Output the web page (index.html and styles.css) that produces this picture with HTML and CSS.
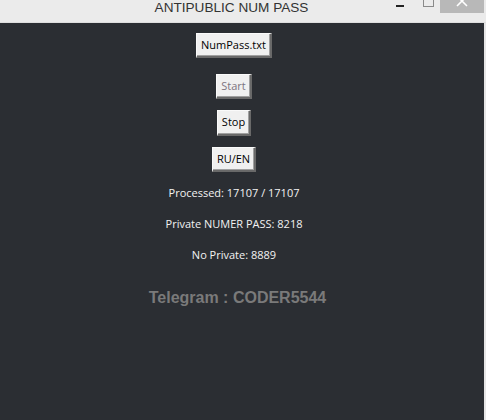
FILE: index.html
```html
<!DOCTYPE html>
<html>
<head>
<meta charset="utf-8">
<link rel="stylesheet" href="styles.css">
</head>
<body>
<div class="window">
  <div class="titlebar">
    <span class="title">ANTIPUBLIC NUM PASS</span>
    <span class="ctl-min"></span>
    <span class="ctl-max"></span>
    <span class="ctl-close">
      <svg width="14" height="14" viewBox="0 0 14 14"><path d="M2 2 L12 12 M12 2 L2 12" stroke="#fff" stroke-width="1.6" fill="none"/></svg>
    </span>
  </div>
  <div class="content">
    <button class="btn btn-file">NumPass.txt</button>
    <button class="btn btn-start" disabled>Start</button>
    <button class="btn btn-stop">Stop</button>
    <button class="btn btn-lang">RU/EN</button>
    <div class="label label-first">Processed: 17107 / 17107</div>
    <div class="label">Private NUMER PASS: 8218</div>
    <div class="label">No Private: 8889</div>
    <div class="telegram">Telegram : CODER5544</div>
  </div>
</div>
</body>
</html>
```
FILE: styles.css
```css
html, body {
  margin: 0;
  padding: 0;
  width: 486px;
  height: 420px;
  overflow: hidden;
  background: #2b2e33;
}
.window {
  width: 486px;
  height: 420px;
  display: flex;
  flex-direction: column;
  font-family: "Open Sans", "Liberation Sans", sans-serif;
}
.titlebar {
  height: 22px;
  flex: none;
  background: #ebebeb;
  border-bottom: 1px solid #dedede;
  position: relative;
  display: flex;
}
.title {
  flex: 1;
  text-align: center;
  padding-right: 23px;
  font-family: "Liberation Sans", Arial, sans-serif;
  font-size: 13.6px;
  line-height: 16px;
  color: #333;
}
.ctl-min {
  position: absolute;
  left: 396px;
  top: 5px;
  width: 8px;
  height: 2px;
  background: #222;
}
.ctl-max {
  position: absolute;
  left: 423px;
  top: -4px;
  width: 9px;
  height: 9px;
  border: 1px solid #8a8a8a;
}
.ctl-close {
  position: absolute;
  left: 440px;
  top: 0;
  width: 44px;
  height: 13px;
  background: #b8b8b8;
  overflow: hidden;
}
.ctl-close svg {
  position: absolute;
  left: 15px;
  top: -6px;
}
.content {
  flex: 1;
  background: #2b2e33;
  border-right: 2px solid #e6e6e6;
  padding-right: 16px;
  display: flex;
  flex-direction: column;
  align-items: center;
}
.btn {
  box-sizing: border-box;
  height: 25px;
  margin: 0;
  padding: 0 4px 1px 4px;
  font-family: "Open Sans", "Liberation Sans", sans-serif;
  font-size: 11px;
  line-height: 22px;
  color: #000;
  background: #f0f0f0;
  border-style: solid;
  border-width: 1px 2px 2px 1px;
  border-color: #fafafa #696969 #696969 #fafafa;
  border-radius: 0;
  box-shadow: inset -1px -1px 0 #a0a0a0;
}
.btn-file { margin-top: 10px; }
.btn-start { margin-top: 16px; color: #7c7480; }
.btn-stop { margin-top: 11px; height: 26px; }
.btn-lang { margin-top: 11px; }
.label {
  font-size: 11px;
  line-height: 14px;
  color: #f2f2f2;
  margin-top: 17px;
}
.label-first { margin-top: 14px; }
.telegram {
  margin-top: 27px;
  padding-left: 7px;
  font-family: "Liberation Sans", Arial, sans-serif;
  font-size: 16px;
  font-weight: bold;
  line-height: 18px;
  color: #7a7a7a;
}
```
